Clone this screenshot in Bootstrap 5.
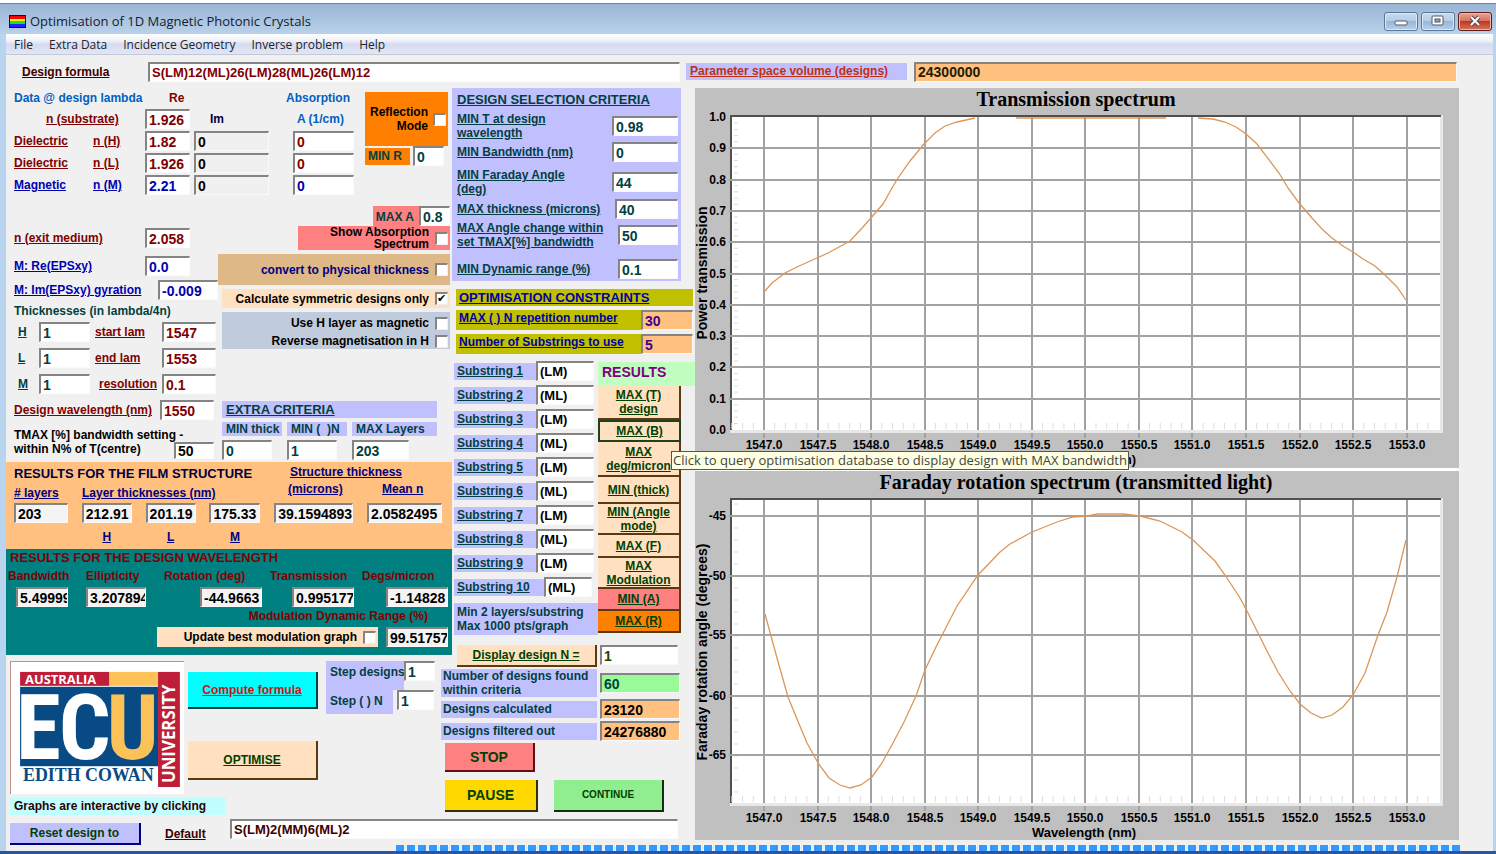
<!DOCTYPE html>
<html lang="en">
<head>
<meta charset="utf-8">
<meta name="viewport" content="width=device-width, initial-scale=1">
<title>Optimisation of 1D Magnetic Photonic Crystals</title>
<link href="https://cdn.jsdelivr.net/npm/bootstrap@5.3.0/dist/css/bootstrap.min.css" rel="stylesheet">
<style>
  :root { --face:#f0f0f0; --lilac:#c0c0ff; --peach:#ffc080; --cream:#ffe0c0; --maroon:#800000; --navy:#0000b0; --pine:#004040; }
  body { background:#b9d4ee; font:bold 12px/14px "Liberation Sans", Arial, sans-serif; color:#000; overflow-x:hidden; }
  label, .cap { white-space:nowrap; }
  .window { min-height:100vh; border-top:3px solid #fff; border-bottom:3px solid #2a56a0; }
  .titlebar { height:31px; border-top:1px solid #6f8299; background:linear-gradient(#9ab5d4,#b9d1ea); color:#16202c; padding:4px 4px 0 9px; }
  .segoe { font-family:"Open Sans","Noto Sans",sans-serif; font-weight:400; font-size:13px; }
  .menubar { height:21px; background:linear-gradient(#fff,#eef1f9 35%,#d6dcef 50%,#e0e6f5); border-bottom:1px solid #c3c9d8; padding-left:8px; gap:16px; }
  .menubar.segoe { font-size:12px; }
  .menubar a { color:#20242c; line-height:21px; }
  .winbtn { width:34px; height:19px; border:1px solid #5c7796; border-radius:3px; background:linear-gradient(#c8dbf0,#b5cce6 48%,#98b6d8 50%,#b4d0ec); box-shadow:inset 0 0 0 1px #dbe9f7; padding:0; }
  .winbtn.close-x { border-color:#5a1c1c; background:linear-gradient(#e8a495,#d8705c 48%,#bf3a22 50%,#d4735a); box-shadow:inset 0 0 0 1px #f0b8ac; }
  .face { background:var(--face); margin:0 3px 0 6px; }
  .toprow { height:33px; display:grid; grid-template-columns:142px 532px 6px 221px 7px minmax(0,1fr); align-items:center; padding-right:36px; }
  .field { border:2px solid; border-width:2px 1px 1px 2px; border-color:#848484 #fafafa #fafafa #848484; border-radius:0; background:#fff; height:20px; padding:0 0 0 2px; font-weight:700; font-size:14px; line-height:17px; color:inherit; min-width:0; width:100%; }
  .field.gray { background:var(--face); }
  .field.strg { font-size:13px; }
  .u { text-decoration:underline; }
  .h13 { font-size:13px; line-height:17px; }
  .maroon { color:var(--maroon); } .navy { color:var(--navy); } .pine { color:var(--pine); } .sky { color:#0060c0; }
  .lilac { background:var(--lilac); } .peach { background:var(--peach) !important; } .cream { background:var(--cream); }
  .tick { appearance:none; width:13px; height:13px; margin:0; background:#fff; border:2px solid; border-width:2px 1px 1px 2px; border-color:#848484 #eee #eee #848484; flex:none; display:block; }
  .tick:checked::before { content:"✔"; display:block; font:11px/10px "DejaVu Sans",sans-serif; }
  .workarea { display:grid; grid-template-columns:435px 11px 243px minmax(0,1fr); grid-template-rows:auto 12px auto auto; padding-right:34px; }
  .a-up { grid-area:1/1/3/3; } .b-up { grid-area:1/3/2/4; } .a-low { grid-area:3/1/4/2; padding:6px 0 0 4px; } .b-low { grid-area:2/2/4/4; } .foot { grid-area:4/1/5/4; } .plots { grid-area:1/4/5/5; }
  .idx { display:grid; grid-template-columns:79px 52px 49px 99px 61px; grid-template-rows:20px 22px 22px 22px 22px; align-items:center; padding:0 0 4px 8px; width:351px; flex:none; }
  .refl { background:#ff8000; height:54px; gap:5px; line-height:14px; padding-right:2px; }
  .lefthalf { width:212px; padding:28px 0 3px 8px; }
  .righthalf { width:234px; padding:6px 2px 0 0; }
  .r20 { height:20px; display:flex; align-items:center; }
  .lam { display:grid; grid-template-columns:25px 51px 5px 67px 54px; align-items:center; height:20px; margin-bottom:6px; }
  .w31 { width:31px; } .w37 { width:37px; } .w40 { width:40px; } .w45 { width:45px; } .w60 { width:60px; }
  .tmaxbox { height:17px; line-height:14px; margin:14px 0 0 -36px; flex:none; }
  .optbox { display:flex; justify-content:flex-end; align-items:center; gap:6px; padding-right:2px; text-align:right; }
  .xc { display:grid; grid-template-columns:60px 60px 85px; column-gap:5px; margin:0 13px 0 4px; }
  .film { height:87px; background:var(--peach); color:#000080; padding:3px 10px 0 8px; }
  .filmgrid { display:grid; grid-template-columns:54px 50px 50px 51px 79px 75px; justify-content:space-between; margin-top:3px; }
  .wave { height:106px; background:#008080; color:var(--maroon); }
  .wave .field, .film .field { color:#000; background:#f4f4f4; }
  .wavegrid { display:grid; grid-template-columns:62px 86px 114px 92px 86px; padding:3px 4px 0 2px; row-gap:4px; }
  .btn3 { border:0; border-right:2px solid #5a3a10; border-bottom:2px solid #5a3a10; border-radius:0; color:#004000; font-weight:700; font-size:12px; line-height:14px; padding:0; }
  .crit { width:229px; height:193px; padding:3px 3px 0 5px; background:var(--lilac); color:var(--pine); }
  .crow { display:flex; justify-content:space-between; align-items:center; height:28px; }
  .crow.tight { height:24px; }
  .crow.mid { height:26px; }
  .olive { background:#c0c000; color:#0000a0; padding-left:3px; }
  .subrow { display:grid; grid-template-columns:82px 58px; align-items:center; height:24px; color:var(--pine); }
  .subrow label { background:var(--lilac); height:17px; line-height:17px; padding-left:3px; }
  .subrow .field { color:#000; }
  .res { width:83px; margin-left:4px; }
  .res .btn3 { width:100%; display:block; background:var(--cream); text-decoration:underline; }
  .tip { position:absolute; left:73px; top:65px; z-index:5; background:#ffffe1; border:1px solid #555; height:19px; line-height:17px; color:#444; white-space:nowrap; padding:0 1px; }
  .stat { display:grid; grid-template-columns:156px 80px; column-gap:3px; align-items:center; margin:2px 0; }
  .stat label { background:var(--lilac); padding-left:2px; }
  .stat + .stat { margin-top:0; }
  .logo { width:174px; height:133px; background:#fff; border:1px solid #c09090; border-width:1px 0 0 1px; display:block; }
  .progress-strip { height:6px; margin:0 33px 0 390px; background:repeating-linear-gradient(90deg,#3399ff 0 8px,#e8f2ff 8px 11px); }
  .plots svg { display:block; width:100%; height:auto; font-family:"Liberation Sans",Arial,sans-serif; font-weight:700; }
</style>
</head>
<body>
<div class="window d-flex flex-column">
  <header class="titlebar d-flex align-items-center">
    <svg width="17" height="13" class="me-1"><rect width="17" height="13" fill="#112"/><rect x="1" y="1" width="15" height="3" fill="#f00"/><rect x="1" y="4" width="15" height="2" fill="#ff0"/><rect x="1" y="6" width="15" height="3" fill="#2d2"/><rect x="1" y="9" width="15" height="3" fill="#22f"/></svg>
    <span class="segoe">Optimisation of 1D Magnetic Photonic Crystals</span>
    <div class="ms-auto d-flex" style="gap:3px">
      <button class="winbtn" aria-label="Minimise"><svg width="14" height="12" class="d-block mx-auto"><rect x="1" y="6" width="12" height="4" rx="1" fill="#fff" stroke="#556"/></svg></button>
      <button class="winbtn" aria-label="Maximise"><svg width="14" height="12" class="d-block mx-auto"><rect x="1" y="1" width="11" height="9" rx="1" fill="#fff" stroke="#556"/><rect x="4" y="4" width="5" height="3" fill="#8ab" stroke="#556"/></svg></button>
      <button class="winbtn close-x" aria-label="Close"><svg width="14" height="12" class="d-block mx-auto"><path d="M3 2l8 8M11 2l-8 8" stroke="#545" stroke-width="4"/><path d="M3 2l8 8M11 2l-8 8" stroke="#fff" stroke-width="2"/></svg></button>
    </div>
  </header>
  <main class="face flex-grow-1 d-flex flex-column">
    <nav class="menubar segoe d-flex">
      <a href="#" class="text-decoration-none">File</a><a href="#" class="text-decoration-none">Extra Data</a><a href="#" class="text-decoration-none">Incidence Geometry</a><a href="#" class="text-decoration-none">Inverse problem</a><a href="#" class="text-decoration-none">Help</a>
    </nav>
    <div class="toprow">
      <label for="formula" class="u ps-3" style="color:#400000">Design formula</label>
      <input id="formula" class="field strg maroon" value="S(LM)12(ML)26(LM)28(ML)26(LM)12">
      <span></span>
      <label for="volume" class="u lilac h13 ps-1" style="color:#c03010;font-size:12px">Parameter space volume (designs)</label>
      <span></span>
      <input id="volume" class="field peach" value="24300000" style="color:#202000">
    </div>
    <div class="workarea">

      <section class="a-up d-flex flex-column">
        <div class="d-flex">
          <div class="idx maroon">
            <span class="cap sky" style="grid-column:1/3">Data @ design lambda</span><span class="ps-4">Re</span><span></span><span class="cap sky text-end pe-1" style="direction:rtl">Absorption</span>
            <label for="sub" class="u ps-4 ms-2">n (substrate)</label><span></span><input id="sub" class="field w45" value="1.926"><span class="ps-3" style="color:#000040">Im</span><span class="cap sky ps-1">A (1/cm)</span>
            <span class="u">Dielectric</span><label for="nh" class="u">n (H)</label><input id="nh" class="field w45" value="1.82"><input class="field gray me-4 text-black w-auto" aria-label="Im H" value="0"><input class="field" aria-label="Absorption H" value="0">
            <span class="u">Dielectric</span><label for="nl" class="u">n (L)</label><input id="nl" class="field w45" value="1.926"><input class="field gray me-4 text-black w-auto" aria-label="Im L" value="0"><input class="field" aria-label="Absorption L" value="0">
            <span class="u navy">Magnetic</span><label for="nm" class="u navy">n (M)</label><input id="nm" class="field w45 navy" value="2.21"><input class="field gray me-4 text-black w-auto" aria-label="Im M" value="0"><input class="field navy" aria-label="Absorption M" value="0">
          </div>
          <div class="flex-grow-1 ms-2 me-1 pt-1">
            <div class="refl d-flex align-items-center justify-content-end text-end"><label for="refl">Reflection<br>Mode</label><input type="checkbox" class="tick" id="refl"></div>
            <div class="d-flex align-items-center pine" style="gap:3px"><label for="minr" class="h13" style="background:#ff8000;padding:0 8px 0 3px;font-size:12px">MIN R</label><input id="minr" class="field w31" value="0"></div>
          </div>
        </div>

        <div class="d-flex flex-grow-1">
          <div class="lefthalf maroon">
            <div class="r20 justify-content-between pe-4 mb-2"><label for="exit" class="u">n (exit medium)</label><input id="exit" class="field w45 me-1" value="2.058"></div>
            <div class="r20 justify-content-between pe-4 navy mb-1"><label for="reeps" class="u">M: Re(EPSxy)</label><input id="reeps" class="field w45 me-1" value="0.0"></div>
            <div class="r20 justify-content-between navy"><label for="imeps" class="u">M: Im(EPSxy) gyration</label><input id="imeps" class="field w60" value="-0.009"></div>
            <div class="pine py-1">Thicknesses (in lambda/4n)</div>
            <div class="lam"><label for="th" class="u pine ps-1">H</label><input id="th" class="field pine" value="1"><span></span><label for="sl" class="u">start lam</label><input id="sl" class="field" value="1547"></div>
            <div class="lam"><label for="tl" class="u pine ps-1">L</label><input id="tl" class="field pine" value="1"><span></span><label for="el" class="u">end lam</label><input id="el" class="field" value="1553"></div>
            <div class="lam"><label for="tm" class="u pine ps-1">M</label><input id="tm" class="field pine" value="1"><span></span><label for="rs" class="u ps-1">resolution</label><input id="rs" class="field" value="0.1"></div>
            <div class="r20 justify-content-between pe-1 mb-2"><label for="dw" class="u">Design wavelength (nm)</label><input id="dw" class="field" style="width:54px" value="1550"></div>
            <div class="d-flex justify-content-between align-items-start pe-1 text-black"><label for="tmax">TMAX [%] bandwidth setting -<br>within N% of T(centre)</label><input id="tmax" class="field w40 tmaxbox" value="50"></div>
          </div>
          <div class="righthalf">
            <div class="r20 justify-content-end pine"><label for="maxa" class="h-100 pt-1" style="background:#ff8080;padding:0 5px 0 3px">MAX A</label><input id="maxa" class="field w31" value="0.8"></div>
            <div class="optbox ms-auto mb-1" style="background:#ff8080;width:152px;height:24px;line-height:12px"><label for="showabs">Show Absorption<br>Spectrum</label><input type="checkbox" class="tick" id="showabs"></div>
            <div class="optbox" style="background:#deb887;height:31px;color:#000080"><label for="phys">convert to physical thickness</label><input type="checkbox" class="tick" id="phys"></div>
            <div class="optbox cream ms-1 my-1" style="height:19px"><label for="sym">Calculate symmetric designs only</label><input type="checkbox" class="tick" id="sym" checked></div>
            <div class="ms-1 mb-5" style="background:#c0ccdc;height:37px"><div class="optbox pt-1"><label for="useh">Use H layer as magnetic</label><input type="checkbox" class="tick" id="useh"></div><div class="optbox pt-1"><label for="rev">Reverse magnetisation in H</label><input type="checkbox" class="tick" id="rev"></div></div>
            <div class="xc pine pt-1">
              <div class="lilac u h13 mb-1 ps-1" style="grid-column:1/4">EXTRA CRITERIA</div>
              <label for="mt" class="lilac ps-1 py-0">MIN thick</label><label for="mn" class="lilac ps-1">MIN (&nbsp; )N</label><label for="ml" class="lilac ps-1">MAX Layers</label>
              <input id="mt" class="field mt-1" style="width:50px" value="0"><input id="mn" class="field mt-1" style="width:50px" value="1"><input id="ml" class="field mt-1" style="width:57px" value="203">
            </div>
          </div>
        </div>

        <div class="film">
          <div class="d-flex justify-content-between"><span class="h13" style="color:#000040">RESULTS FOR THE FILM STRUCTURE</span><span class="u pe-4 me-3">Structure thickness</span></div>
          <div class="d-flex u"><span style="width:68px" class="pt-1"># layers</span><span style="width:206px" class="pt-1">Layer thicknesses (nm)</span><span style="width:94px">(microns)</span><span>Mean n</span></div>
          <div class="filmgrid"><input class="field" aria-label="# layers" value="203"><input class="field" aria-label="H thickness" value="212.91"><input class="field" aria-label="L thickness" value="201.19"><input class="field" aria-label="M thickness" value="175.33"><input class="field" aria-label="Structure thickness" value="39.15948935"><input class="field" aria-label="Mean n" value="2.0582495"></div>
          <div class="filmgrid u text-center pt-1"><span></span><span>H</span><span>L</span><span>M</span></div>
        </div>

        <div class="wave">
          <div class="h13 ps-1">RESULTS FOR THE DESIGN WAVELENGTH</div>
          <div class="wavegrid">
            <label for="bw">Bandwidth</label><label for="ell" class="ps-3">Ellipticity</label><label for="rot" class="ps-2">Rotation (deg)</label><label for="tr">Transmission</label><label for="dm">Degs/micron</label>
            <input id="bw" class="field ms-2" style="width:52px" value="5.499995"><input id="ell" class="field ms-3" style="width:60px" value="3.207894"><input id="rot" class="field ms-auto me-2" style="width:62px" value="-44.9663"><input id="tr" class="field ms-auto me-2" style="width:62px" value="0.9951772"><input id="dm" class="field ms-auto" style="width:62px" value="-1.14828">
          </div>
          <div class="text-end pe-4" style="padding-top:2px">Modulation Dynamic Range (%)</div>
          <div class="d-flex justify-content-end pe-1 pt-1 text-black gap-2"><div class="optbox cream" style="width:221px;height:20px"><label for="upd">Update best modulation graph</label><input type="checkbox" class="tick" id="upd"></div><input class="field" aria-label="Modulation dynamic range" style="width:62px" value="99.517572"></div>
        </div>
      </section>

      <section class="b-up">
        <div class="crit">
          <div class="u h13">DESIGN SELECTION CRITERIA</div>
          <div class="crow mt-1"><label for="c1" class="u">MIN T at design<br>wavelength</label><input id="c1" class="field" style="width:66px" value="0.98"></div>
          <div class="crow tight"><label for="c2" class="u">MIN Bandwidth (nm)</label><input id="c2" class="field" style="width:66px" value="0"></div>
          <div class="crow mt-1"><label for="c3" class="u">MIN Faraday Angle<br>(deg)</label><input id="c3" class="field" style="width:66px" value="44"></div>
          <div class="crow mid"><label for="c4" class="u">MAX thickness (microns)</label><input id="c4" class="field" style="width:63px" value="40"></div>
          <div class="crow mid"><label for="c5" class="u">MAX Angle change within<br>set TMAX[%] bandwidth</label><input id="c5" class="field" style="width:60px" value="50"></div>
          <div class="crow mid mt-2"><label for="c6" class="u">MIN Dynamic range (%)</label><input id="c6" class="field" style="width:60px" value="0.1"></div>
        </div>
        <div class="ms-1 pt-2" style="margin-right:2px">
          <div class="olive u h13">OPTIMISATION CONSTRAINTS</div>
          <div class="d-flex mt-1"><label for="o1" class="olive u h13 flex-shrink-0" style="width:185px;font-size:12px">MAX ( ) N repetition number</label><input id="o1" class="field peach" style="color:#400090" value="30"></div>
          <div class="d-flex mt-1"><label for="o2" class="olive u h13 flex-shrink-0" style="width:185px;font-size:12px">Number of Substrings to use</label><input id="o2" class="field peach" style="color:#400090" value="5"></div>
        </div>
        <div class="d-flex pt-1">
          <div style="width:142px;padding:1px 0 0 2px" class="flex-shrink-0">
            <div class="subrow"><label for="s1" class="u">Substring 1</label><input id="s1" class="field strg" value="(LM)"></div>
            <div class="subrow"><label for="s2" class="u">Substring 2</label><input id="s2" class="field strg" value="(ML)"></div>
            <div class="subrow"><label for="s3" class="u">Substring 3</label><input id="s3" class="field strg" value="(LM)"></div>
            <div class="subrow"><label for="s4" class="u">Substring 4</label><input id="s4" class="field strg" value="(ML)"></div>
            <div class="subrow"><label for="s5" class="u">Substring 5</label><input id="s5" class="field strg" value="(LM)"></div>
            <div class="subrow"><label for="s6" class="u">Substring 6</label><input id="s6" class="field strg" value="(ML)"></div>
            <div class="subrow"><label for="s7" class="u">Substring 7</label><input id="s7" class="field strg" value="(LM)"></div>
            <div class="subrow"><label for="s8" class="u">Substring 8</label><input id="s8" class="field strg" value="(ML)"></div>
            <div class="subrow"><label for="s9" class="u">Substring 9</label><input id="s9" class="field strg" value="(LM)"></div>
            <div class="subrow" style="grid-template-columns:90px 48px"><label for="s10" class="u">Substring 10</label><input id="s10" class="field strg" value="(ML)"></div>
            <div class="lilac pine cap mt-1" style="width:144px;padding:2px 0 2px 3px">Min 2 layers/substring<br>Max 1000 pts/graph</div>
          </div>
          <div class="flex-grow-1 pt-1">
            <div style="background:#c0ffc0;color:#800080;font-size:14px;line-height:18px;height:24px;padding:1px 0 0 4px;margin-left:4px">RESULTS</div>
            <div class="res position-relative">
              <button class="btn3" style="height:34px">MAX (T)<br>design</button>
              <button class="btn3" style="height:22px;border:2px solid #204020" aria-describedby="tip">MAX (B)</button>
              <button class="btn3" style="height:35px">MAX<br>deg/micron</button>
              <button class="btn3" style="height:27px">MIN (thick)</button>
              <button class="btn3" style="height:31px">MIN (Angle<br>mode)</button>
              <button class="btn3" style="height:23px">MAX (F)</button>
              <button class="btn3" style="height:31px">MAX<br>Modulation</button>
              <button class="btn3" style="height:22px;background:#ff8080">MIN (A)</button>
              <button class="btn3" style="height:22px;background:#ff8000">MAX (R)</button>
              <div class="tip segoe" id="tip" role="tooltip">Click to query optimisation database to display design with MAX bandwidth</div>
            </div>
          </div>
        </div>
      </section>

      <section class="a-low">
        <div class="d-flex">
          <svg class="logo" viewBox="0 0 174 133" role="img" aria-label="Edith Cowan University, Australia">
            <rect x="9" y="10" width="90" height="14" fill="#be1e37"/><rect x="99" y="10" width="49" height="14" fill="#fcc257"/><rect x="148" y="10" width="22" height="116" fill="#be1e37"/><rect x="9" y="25" width="139" height="80" fill="#084b84"/>
            <g font-family="Roboto Condensed,Roboto,sans-serif" font-weight="700" font-size="92">
              <text x="5" y="98" fill="#fff">E</text><text x="48" y="98" fill="#fff">C</text><text x="96" y="98" fill="#fcc257">U</text>
            </g>
            <g font-family="Open Sans,sans-serif" font-weight="700" fill="#fff"><text x="14" y="22" font-size="13">AUSTRALIA</text><text transform="translate(165 122) rotate(-90)" font-size="17">UNIVERSITY</text></g>
            <text x="12" y="120" font-family="Liberation Serif,serif" font-weight="700" font-size="18" fill="#084b84">EDITH COWAN</text>
          </svg>
          <div class="ms-1 d-flex flex-column" style="padding-top:11px">
            <button class="btn3 u" style="width:130px;height:37px;background:#0ff;color:#d01010;border-color:#004040">Compute formula</button>
            <button class="btn3 u h13" style="width:130px;height:39px;background:#ffe0c0;margin-top:32px">OPTIMISE</button>
          </div>
          <div class="ms-2 pine">
            <div class="d-flex"><label for="sd" class="lilac pt-1 ps-1" style="width:78px;height:29px;overflow:hidden">Step designs</label><input id="sd" class="field w31" value="1"></div>
            <div class="d-flex"><label for="sn" class="lilac pt-1 ps-1" style="width:67px;height:24px">Step ( ) N</label><input id="sn" class="field w37 ms-1" value="1"></div>
          </div>
        </div>
        <div class="cap ps-1" style="width:216px;margin-top:3px;padding:2px 0;background:#c0ffff;color:#300000">Graphs are interactive by clicking</div>
      </section>

      <section class="b-low pine">
        <div class="d-flex ps-3" style="gap:3px;padding-top:2px"><button class="btn3 cream u" style="width:140px;height:22px">Display design N =</button><input class="field" aria-label="Design number" style="width:78px;color:#204000" value="1"></div>
        <div class="stat"><label for="t1">Number of designs found<br>within criteria</label><input id="t1" class="field" style="background:#98fb98" value="60"></div>
        <div class="stat"><label for="t2" class="h13" style="font-size:12px">Designs calculated</label><input id="t2" class="field peach text-black" value="23120"></div>
        <div class="stat"><label for="t3" class="h13" style="font-size:12px">Designs filtered out</label><input id="t3" class="field peach text-black" value="24276880"></div>
        <div class="ps-1"><button class="btn3 d-block" style="width:90px;height:29px;background:#ff8080;font-size:14px;border-color:#601010">STOP</button></div>
        <div class="ps-1 pt-2 d-flex gap-3"><button class="btn3" style="width:93px;height:32px;background:#ffd800;font-size:14px;border-color:#303000">PAUSE</button><button class="btn3" style="width:110px;height:32px;background:#90ee90;font-size:10px;border-color:#103010">CONTINUE</button></div>
      </section>

      <section class="foot ps-1">
        <div class="d-flex pt-1 align-items-start">
          <button class="btn3 mt-1 lilac" style="width:131px;height:22px;border-color:#000080">Reset design to</button>
          <label for="def" class="u pt-2 ps-4" style="width:89px;color:#400000">Default</label>
          <input id="def" class="field strg" style="width:448px;color:#400000" value="S(LM)2(MM)6(ML)2">
        </div>
      </section>

      <section class="plots">
        <svg id="plotT" viewBox="695 88 764 380" role="img" aria-label="Transmission spectrum"></svg>
        <div class="bg-white" style="height:3px"></div>
        <svg id="plotF" viewBox="695 471 764 369" role="img" aria-label="Faraday rotation spectrum"></svg>
      </section>
    </div>
    <div class="progress-strip mt-auto"></div>
  </main>
</div>
<script>
  // Draws one spectrum: frame, grid, minor ticks, labels and curve segments.
  function plot(id, o) {
    let s = `<rect x="695" y="${o.y0}" width="764" height="${o.h}" fill="#c0c0c0"/>`;
    s += `<rect x="730" y="${o.top}" width="713" height="${o.bot - o.top + 3}" fill="#e8e8e8"/><rect x="730" y="${o.top}" width="710" height="${o.bot - o.top}" fill="#fff"/>`;
    s += `<path d="M731 ${o.bot}V${o.top + 1}H1441" fill="none" stroke="#505050" stroke-width="2"/>`;
    for (let i = -3; i <= 62; i++) { const x = 764 + i * 10.71; s += `<path d="M${x} ${o.bot - 7}v6" stroke="#ddd"/>`; }
    for (let y = o.m0; y < o.bot - 2; y += o.ms) s += `<path d="M734 ${y}h4" stroke="#ddd"/>`;
    for (let i = 0; i <= 12; i++) {
      const x = Math.round(764 + i * 53.55);
      s += `<path d="M${x} ${o.top + 2}V${o.bot}M${x} ${o.bot + 3}v5" stroke="#a2a2a2" stroke-width="2"/>`;
      s += `<text x="${x}" y="${o.bot + 19}" font-size="12" text-anchor="middle">${(1547 + i / 2).toFixed(1)}</text>`;
    }
    o.ticks.forEach(([v, y]) => {
      if (y > o.top + 3 && y < o.bot) s += `<path d="M729 ${y}H1440" stroke="#a2a2a2" stroke-width="2"/>`;
      s += `<text x="726" y="${y + 4}" font-size="12" text-anchor="end">${v}</text>`;
    });
    o.curves.forEach(c => s += `<polyline points="${c}" fill="none" stroke="#dc9658" stroke-width="1.3"/>`);
    s += `<text x="1076" y="${o.y0 + 18}" font-size="20" text-anchor="middle" font-family="Liberation Serif,Times New Roman,serif">${o.title}</text>`;
    s += `<text x="1084" y="${o.bot + 34}" font-size="13" text-anchor="middle">Wavelength (nm)</text>`;
    s += `<text transform="translate(707 ${o.ly}) rotate(-90)" font-size="14" text-anchor="middle">${o.ylabel}</text>`;
    document.getElementById(id).innerHTML = s;
  }
  plot('plotT', { y0: 88, h: 380, top: 115, bot: 430, m0: 123, ms: 6.26, ly: 273, title: 'Transmission spectrum', ylabel: 'Power transmission',
    ticks: [...Array(11)].map((_, i) => [(i / 10).toFixed(1), Math.round(430 - i * 31.3)]),
    curves: ['764,292 772,283 785,273 797,267 817,258 828,253 850,241 863,227 870,219 883,204 892,188 898,178 910,161 924,144 935,133 945,126 957,122 975,118', '1016,118 1166,118',
      '1198,118 1213,119 1225,122 1236,127 1246,134 1257,144 1279,173 1288,188 1299,203 1312,218 1322,229 1332,238 1343,246 1353,252 1363,259 1375,266 1385,275 1397,287 1406,300'] });
  plot('plotF', { y0: 471, h: 369, top: 498, bot: 803, m0: 504, ms: 12, ly: 652, title: 'Faraday rotation spectrum (transmitted light)', ylabel: 'Faraday rotation angle (degrees)',
    ticks: [[-45, 516], [-50, 576], [-55, 635], [-60, 696], [-65, 755]],
    curves: ['765,614 777,658 788,697 797,719 807,743 818,763 829,778 840,785 850,788 861,785 872,777 882,763 893,743 904,722 916,696 925,670 936,647 957,606 978,575 1000,552 1010,544 1032,532 1057,522 1073,517 1088,516 1097,514 1123,514 1140,516 1160,521 1182,532 1193,540 1215,561 1225,575 1240,598 1247,611 1258,633 1268,653 1278,672 1290,691 1300,704 1311,713 1322,718 1332,715 1343,707 1353,695 1365,673 1378,635 1387,612 1397,577 1406,540'] });
</script>
<script src="https://cdn.jsdelivr.net/npm/bootstrap@5.3.0/dist/js/bootstrap.bundle.min.js"></script>
</body>
</html>
